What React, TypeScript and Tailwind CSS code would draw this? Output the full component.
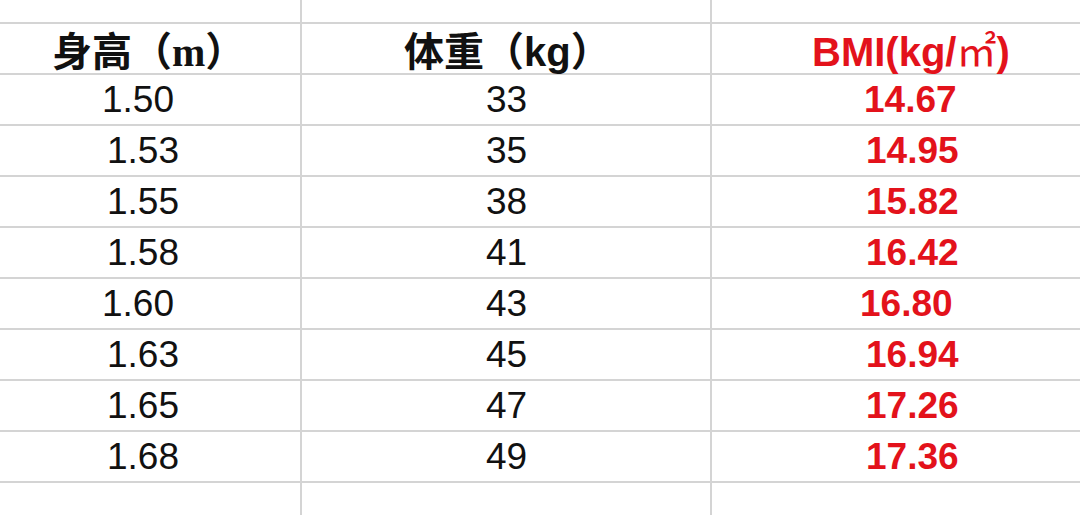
import React from "react";

const rows: { h: string; hp: string; w: string; b: string; bp: string }[] = [
  { h: "1.50", hp: "pl-[102px]", w: "33", b: "14.67", bp: "pl-[152px]" },
  { h: "1.53", hp: "pl-[107px]", w: "35", b: "14.95", bp: "pl-[154px]" },
  { h: "1.55", hp: "pl-[107px]", w: "38", b: "15.82", bp: "pl-[154px]" },
  { h: "1.58", hp: "pl-[107px]", w: "41", b: "16.42", bp: "pl-[154px]" },
  { h: "1.60", hp: "pl-[102px]", w: "43", b: "16.80", bp: "pl-[148px]" },
  { h: "1.63", hp: "pl-[107px]", w: "45", b: "16.94", bp: "pl-[154px]" },
  { h: "1.65", hp: "pl-[107px]", w: "47", b: "17.26", bp: "pl-[154px]" },
  { h: "1.68", hp: "pl-[107px]", w: "49", b: "17.36", bp: "pl-[154px]" },
];

const line = "border-[#d4d4d4]";
const num = "text-[37px] leading-[37px] font-['Liberation_Sans',Arial,sans-serif] whitespace-nowrap";

export default function App() {
  return (
    <div className="w-[1080px] h-[515px] bg-white overflow-hidden grid grid-cols-[302px_410px_1fr] grid-rows-[24px_repeat(9,51px)_1fr]">
      {/* top spacer row */}
      <div className={`border-r-2 border-b-2 ${line}`} />
      <div className={`border-r-2 border-b-2 ${line}`} />
      <div className={`border-b-2 ${line}`} />

      {/* header row */}
      <div className={`border-r-2 border-b-2 ${line} pl-[52px] pt-[5px]`}>
        <span className="text-[40px] leading-[40px] font-bold text-[#111] font-['Noto_Sans_CJK_SC',sans-serif] whitespace-nowrap">
          身高（<span className="font-['Liberation_Serif',serif]">m</span>）
        </span>
      </div>
      <div className={`border-r-2 border-b-2 ${line} pl-[102px] pt-[5px]`}>
        <span className="text-[40px] leading-[40px] font-bold text-[#111] font-['Noto_Sans_CJK_SC',sans-serif] whitespace-nowrap">
          体重（<span className="font-['Liberation_Sans',Arial,sans-serif]">kg</span>）
        </span>
      </div>
      <div className={`border-b-2 ${line} pl-[100px] pt-[5px]`}>
        <span className="text-[40px] leading-[40px] font-bold text-[#e3121b] font-['Liberation_Sans',Arial,sans-serif] whitespace-nowrap">
          BMI(kg/<span className="font-['Noto_Sans_CJK_SC',sans-serif] font-normal">㎡</span>)
        </span>
      </div>

      {rows.map((r) => (
        <React.Fragment key={r.h}>
          <div className={`border-r-2 border-b-2 ${line} ${r.hp} flex items-center`}>
            <span className={`${num} text-[#111]`}>{r.h}</span>
          </div>
          <div className={`border-r-2 border-b-2 ${line} pl-[184px] flex items-center`}>
            <span className={`${num} text-[#111]`}>{r.w}</span>
          </div>
          <div className={`border-b-2 ${line} ${r.bp} flex items-center`}>
            <span className={`${num} font-bold text-[#e3121b]`}>{r.b}</span>
          </div>
        </React.Fragment>
      ))}

      {/* bottom filler */}
      <div className={`border-r-2 ${line}`} />
      <div className={`border-r-2 ${line}`} />
      <div />
    </div>
  );
}
